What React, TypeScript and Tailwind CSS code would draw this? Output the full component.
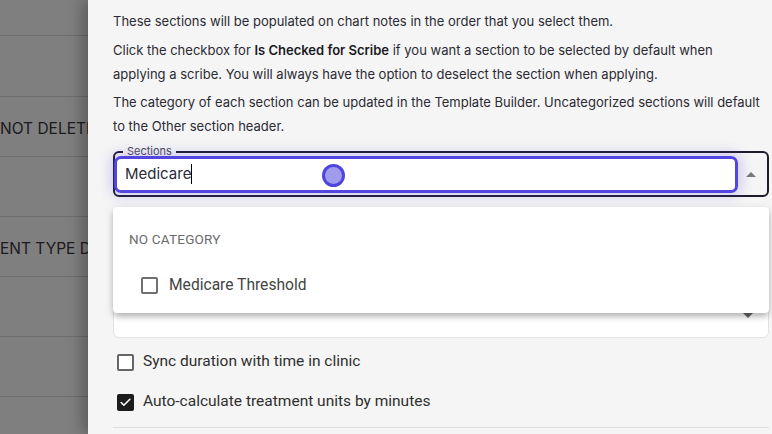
import { Check } from 'lucide-react'

const ROWS = [
  { h: 'h-[36px]', text: '' },
  { h: 'h-[61px]', text: '' },
  { h: 'h-[60px]', text: 'NOT DELETE' },
  { h: 'h-[60px]', text: '' },
  { h: 'h-[60px]', text: 'ENT TYPE DOC' },
  { h: 'h-[60px]', text: '' },
  { h: 'h-[60px]', text: '' },
  { h: 'h-[60px]', text: '' },
]

export default function App() {
  return (
    <div className="relative w-[772px] h-[434px] overflow-hidden bg-white font-['Inter',sans-serif]">
      {/* Page behind the drawer */}
      <div className="flex flex-col">
        {ROWS.map((r, i) => (
          <div key={i} className={`${r.h} flex items-center pt-[4px] border-b border-[#dcdcdc] text-[15.5px] text-[#3a3440] whitespace-nowrap`}>
            {r.text}
          </div>
        ))}
      </div>

      {/* Backdrop */}
      <div className="absolute inset-0 bg-black/50" />

      {/* Drawer */}
      <div className="absolute top-0 bottom-0 left-[88px] right-0 bg-[#f5f5f5] shadow-[-6px_0_14px_rgba(0,0,0,0.28)] pl-[25px] pr-[3px] pt-[9px]">
        <div className="text-[13px] leading-[24px] text-[#2b2a33] space-y-[4.5px]">
          <p>These sections will be populated on chart notes in the order that you select them.</p>
          <p>
            Click the checkbox for <b className="font-semibold text-[#1a1a1f]">Is Checked for Scribe</b> if you want a section to be selected by default when
            <br />
            applying a scribe. You will always have the option to deselect the section when applying.
          </p>
          <p>
            The category of each section can be updated in the Template Builder. Uncategorized sections will default to the Other section header.
          </p>
        </div>

        {/* Sections field */}
        <div className="relative mt-[13px]">
          <div className="relative h-[46px] border-2 border-[#1e1c2b] rounded-[6px] flex items-center">
            <span className="absolute -top-[10px] left-[8px] px-[4px] bg-[#f5f5f5] text-[11px] leading-[16px] text-[#4a4852]">Sections</span>
            <div className="relative -ml-[1px] w-[624px] h-[37px] border-[3px] border-[#5346e0] rounded-[7px] bg-white shadow-[0_0_12px_4px_rgba(83,70,224,0.22)] flex items-center pl-[8px]">
              <span className="text-[15px] text-[#2a2a3a]">Medicare</span>
              <span className="w-px h-[20px] bg-black" />
              <span className="absolute left-[205px] top-[5px] w-[23px] h-[23px] rounded-full border-[3px] border-[#4f45dc] bg-[#a09bec]" />
            </div>
            <span className="ml-[8px] w-0 h-0 border-l-[5px] border-r-[5px] border-b-[5px] border-l-transparent border-r-transparent border-b-[#7a7a7a]" />
          </div>

          {/* Options popup */}
          <div className="absolute left-0 right-0 top-[56px] h-[106px] z-10 bg-white rounded-[4px] shadow-[0_4px_6px_-1px_rgba(0,0,0,0.25),0_2px_10px_rgba(0,0,0,0.12)] pt-[22px] font-['Roboto',sans-serif]">
            <div className="pl-[16px] text-[13.5px] leading-[20px] text-[#6b6b6b] tracking-[0.2px]">NO CATEGORY</div>
            <div className="mt-[25px] pl-[28px] flex items-center gap-[11px]">
              <span className="w-[17px] h-[17px] border-2 border-[#707070] rounded-[2px]" />
              <span className="text-[15.6px] text-[#444]">Medicare Threshold</span>
            </div>
          </div>
        </div>

        {/* Field under the popup */}
        <div className="mt-[95px] h-[46px] bg-white border border-[#e3e3e3] rounded-[6px] flex items-center justify-end pr-[15px]">
          <span className="w-0 h-0 border-l-[5px] border-r-[5px] border-t-[5px] border-l-transparent border-r-transparent border-t-[#666]" />
        </div>

        {/* Options */}
        <div className="mt-[15px] flex flex-col gap-[22px] font-['Roboto',sans-serif] text-[15.5px] text-[#2f2f2f]">
          <label className="flex items-center gap-[9px] pl-[4px] h-[18px]">
            <span className="w-[17px] h-[17px] border-2 border-[#666] rounded-[2px] bg-white" />
            Sync duration with time in clinic
          </label>
          <label className="flex items-center gap-[9px] pl-[4px] h-[18px]">
            <span className="w-[17px] h-[17px] rounded-[2px] bg-[#1c1c1c] flex items-center justify-center">
              <Check className="w-[13px] h-[13px] text-white" strokeWidth={3} />
            </span>
            Auto-calculate treatment units by minutes
          </label>
        </div>
        <div className="mt-[16px] border-t border-[#dedede]" />
      </div>
    </div>
  )
}
